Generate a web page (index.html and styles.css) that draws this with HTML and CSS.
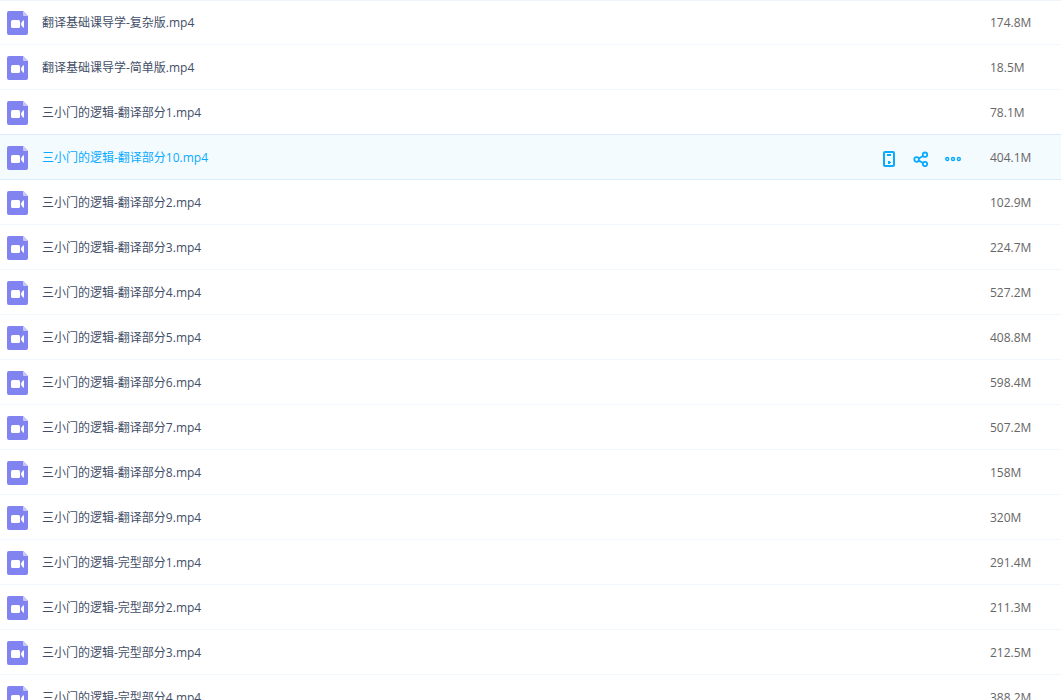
FILE: index.html
```
<!DOCTYPE html>
<html lang="zh-CN">
<head>
<meta charset="utf-8">
<title>文件列表</title>
<link rel="stylesheet" href="styles.css">
</head>
<body>
<svg class="sprite" aria-hidden="true">
  <symbol id="video" viewBox="0 0 21 24">
    <path d="M2 0H16L21 5V22a2 2 0 0 1-2 2H2a2 2 0 0 1-2-2V2a2 2 0 0 1 2-2z" fill="#8183f1"/>
    <path d="M16 0L21 5H17a1 1 0 0 1-1-1z" fill="#c8c9fa"/>
    <rect x="4" y="9" width="9" height="8" rx="1.5" fill="#fff"/>
    <path d="M14 12.2L16 9.5Q17 9 17 10V16Q17 17 16 16.5L14 13.8z" fill="#fff"/>
  </symbol>
</svg>
<table class="files">
  <tbody id="rows"></tbody>
</table>
<template id="actions">
  <span class="actions">
    <button class="action" type="button" aria-label="发送到手机">
      <svg width="16" height="16" viewBox="0 0 16 16" fill="none" stroke="currentColor" stroke-width="2"><rect x="3" y="1" width="10" height="14" rx="1"/><path d="M6 4H10" stroke-width="2"/><path d="M7 10H9V11H10V12H9V13H7z" fill="currentColor" stroke="none"/></svg>
    </button>
    <button class="action" type="button" aria-label="分享">
      <svg width="16" height="16" viewBox="0 0 16 16" fill="none" stroke="currentColor" stroke-width="1.8"><circle cx="3.6" cy="8.5" r="2.3"/><circle cx="12" cy="3.7" r="2.2"/><circle cx="12" cy="13" r="2.2"/><path d="M5.8 7.5L10 5M5.8 9.6L10 12"/></svg>
    </button>
    <button class="action" type="button" aria-label="更多">
      <svg width="16" height="16" viewBox="0 0 16 16" fill="none" stroke="currentColor" stroke-width="1.4"><circle cx="2.2" cy="8" r="1.5"/><circle cx="8" cy="8" r="1.5"/><circle cx="13.8" cy="8" r="1.5"/></svg>
    </button>
  </span>
</template>
<script src="files.js"></script>
</body>
</html>
```

FILE: styles.css
```
* {
  box-sizing: border-box;
}

body {
  margin: 0;
  overflow: hidden;
  background: #fff;
  color: #424e67;
  font: 12px/18px "Open Sans", "Noto Sans CJK SC", sans-serif;
}

.sprite {
  position: absolute;
  width: 0;
  height: 0;
}

.files {
  width: 100%;
  table-layout: fixed;
  border-spacing: 0;
  box-shadow: inset 0 1px #f0f5fd;
}

.cell {
  height: 45px;
  padding: 0;
  border-bottom: 1px solid #f2f6fd;
  vertical-align: middle;
}

.size {
  width: 71px;
  padding-top: 2px;
  color: #666;
}

.line {
  display: flex;
  align-items: center;
  padding: 2px 29px 0 7px;
}

.icon {
  width: 21px;
  height: 24px;
  margin-right: 14px;
}

.name {
  flex: 1;
  color: inherit;
  text-decoration: none;
}

.selected .cell {
  background: #f4fbff;
}

.selected .cell,
.row:has(+ .selected) .cell {
  border-color: #daebfe;
}

.selected .name {
  color: #09aaff;
}

.actions {
  display: flex;
  gap: 16px;
  padding-top: 2px;
}

.action {
  display: flex;
  padding: 0;
  border: 0;
  background: none;
  color: #09aaff;
  cursor: pointer;
}
```

FILE: files.js
```
const files = [
  ["翻译基础课导学-复杂版.mp4", "174.8M"],
  ["翻译基础课导学-简单版.mp4", "18.5M"],
  ["三小门的逻辑-翻译部分1.mp4", "78.1M"],
  ["三小门的逻辑-翻译部分10.mp4", "404.1M", true],
  ["三小门的逻辑-翻译部分2.mp4", "102.9M"],
  ["三小门的逻辑-翻译部分3.mp4", "224.7M"],
  ["三小门的逻辑-翻译部分4.mp4", "527.2M"],
  ["三小门的逻辑-翻译部分5.mp4", "408.8M"],
  ["三小门的逻辑-翻译部分6.mp4", "598.4M"],
  ["三小门的逻辑-翻译部分7.mp4", "507.2M"],
  ["三小门的逻辑-翻译部分8.mp4", "158M"],
  ["三小门的逻辑-翻译部分9.mp4", "320M"],
  ["三小门的逻辑-完型部分1.mp4", "291.4M"],
  ["三小门的逻辑-完型部分2.mp4", "211.3M"],
  ["三小门的逻辑-完型部分3.mp4", "212.5M"],
  ["三小门的逻辑-完型部分4.mp4", "388.2M"]
];

const body = document.getElementById("rows");
for (const [name, size, selected] of files) {
  const row = document.createElement("tr");
  row.className = selected ? "row selected" : "row";
  row.innerHTML = `<td class="cell"><div class="line"><svg class="icon" aria-hidden="true"><use href="#video"/></svg><a class="name" href="#">${name}</a></div></td><td class="cell size">${size}</td>`;
  if (selected) {
    row.querySelector(".line").append(document.getElementById("actions").content.cloneNode(true));
  }
  body.append(row);
}
```
